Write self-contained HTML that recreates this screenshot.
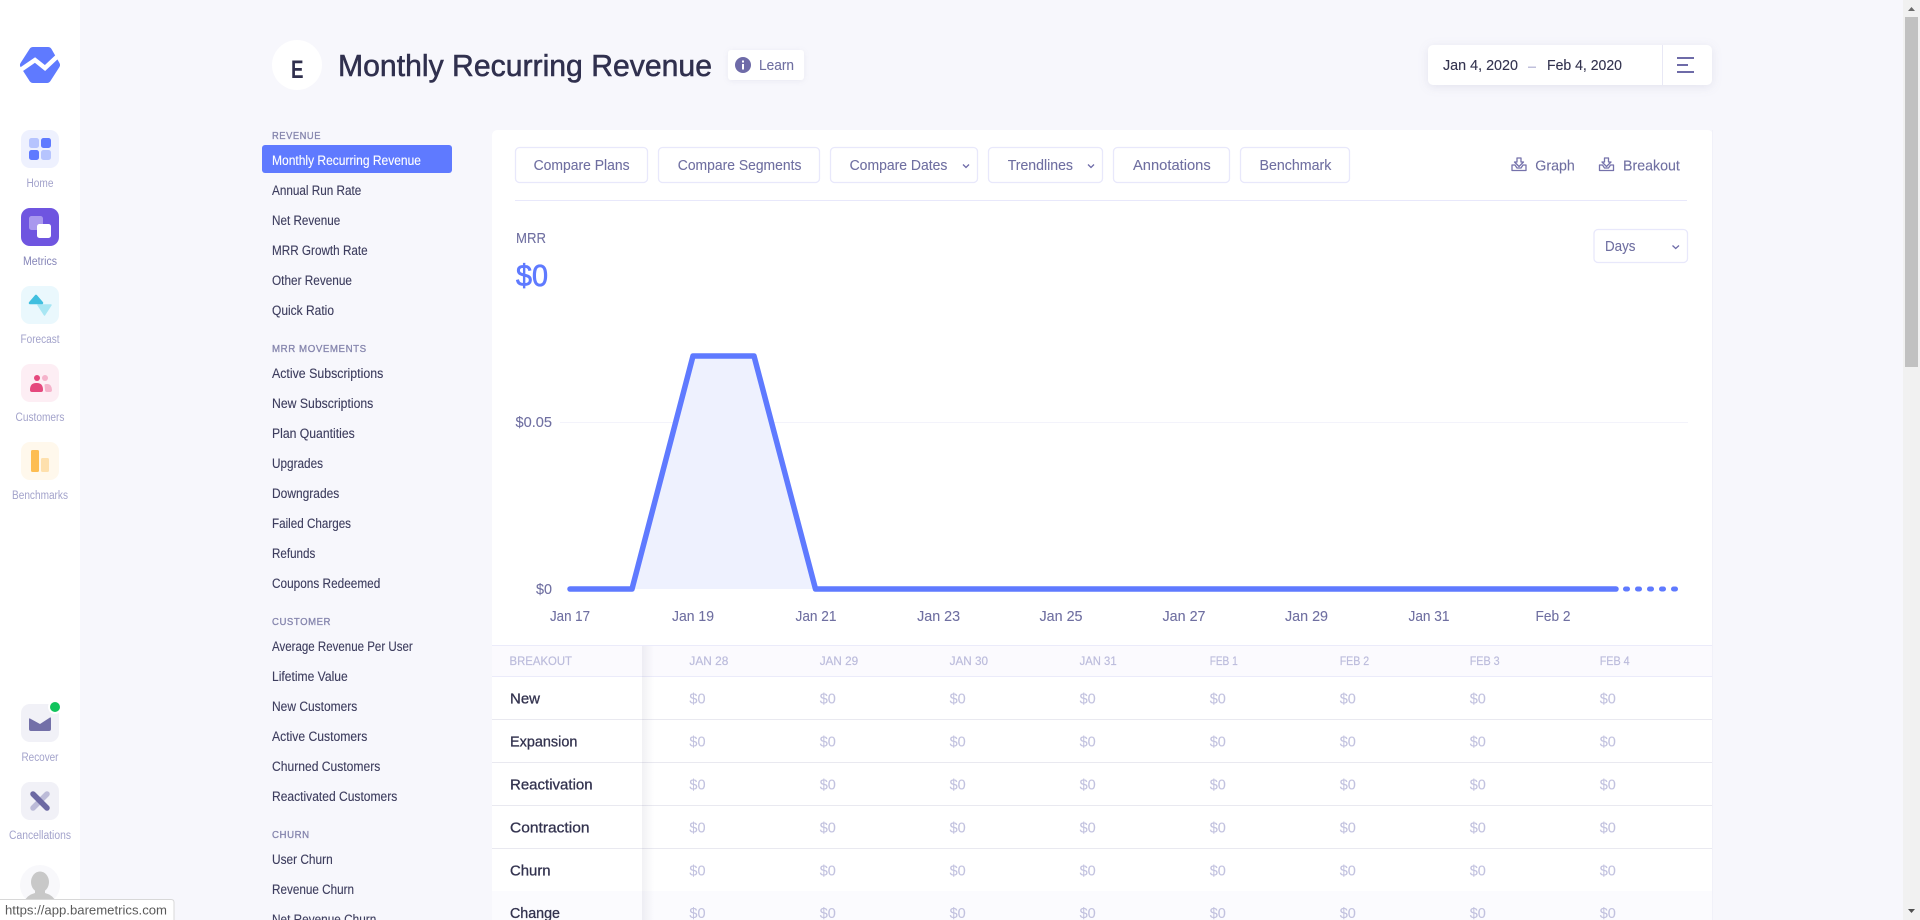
<!DOCTYPE html>
<html lang="en"><head><meta charset="utf-8"><title>Monthly Recurring Revenue</title>
<style>
html,body{margin:0;padding:0;width:1920px;height:920px;overflow:hidden;background:#f7f7fc}
svg{display:block;position:absolute;left:0;top:0}
text{font-family:"Liberation Sans",sans-serif;white-space:pre}
.n{font-size:13.5px;fill:#3d3d5e;stroke:#3d3d5e;stroke-width:.12}
.h{font-size:10.5px;fill:#8585ad;stroke:#8585ad;stroke-width:.3;letter-spacing:.6px}
.s{font-size:11.5px;fill:#a3a3cb;text-anchor:middle}
.b{font-size:15px;fill:#6f6fa1;stroke:#6f6fa1;stroke-width:.1}
.c{font-size:15px;fill:#6f6fa1;text-anchor:middle;stroke:#6f6fa1;stroke-width:.1}
.r{font-size:15px;fill:#33334f;stroke:#33334f;stroke-width:.3}
.v{font-size:14.5px;fill:#c2c2df;stroke:#c2c2df;stroke-width:.1}
.t{font-size:12px;fill:#bcbcdc;stroke:#bcbcdc;stroke-width:.2}
</style></head><body>
<svg width="1920" height="920" viewBox="0 0 1920 920" xmlns="http://www.w3.org/2000/svg">
<rect width="1920" height="920" fill="#f7f7fc"/>
<rect width="80" height="920" fill="#fff"/>

<!-- logo -->
<polygon points="33,51 48,51 56,65 47,79 33,79 24,65" fill="#5f7aff" stroke="#5f7aff" stroke-width="8" stroke-linejoin="round"/>
<polyline points="19,71 35,60 45,68 61,53" fill="none" stroke="#fff" stroke-width="4.500"/>

<!-- sidebar icons -->
<rect x="21" y="130" width="38" height="38" rx="9" fill="#eef1fe"/>
<rect x="29" y="138" width="10" height="10" rx="2.500" fill="#b6c4fe"/><rect x="41" y="138" width="10" height="10" rx="2.500" fill="#5f7aff"/>
<rect x="29" y="150" width="10" height="10" rx="2.500" fill="#5f7aff"/><rect x="41" y="150" width="10" height="10" rx="2.500" fill="#b6c4fe"/>
<text class="s" x="40" y="187" textLength="27" lengthAdjust="spacingAndGlyphs">Home</text>

<rect x="21" y="208" width="38" height="38" rx="9" fill="#6f55e0"/>
<rect x="29" y="216" width="14" height="14" rx="2.500" fill="#a998ee"/><rect x="37" y="224" width="14" height="14" rx="2.500" fill="#fff"/>
<text class="s" x="40" y="265" textLength="34" lengthAdjust="spacingAndGlyphs" style="fill:#8585b8">Metrics</text>

<rect x="21" y="286" width="38" height="38" rx="9" fill="#eaf8fd"/>
<polygon points="44.500,305 51,305 44.500,315 38,305" fill="#a8e6f3" stroke="#a8e6f3" stroke-width="1.500" stroke-linejoin="round"/>
<polygon points="36,296 42,303 30,303" fill="#41bfdf" stroke="#41bfdf" stroke-width="2.500" stroke-linejoin="round"/>
<text class="s" x="40" y="343" textLength="39" lengthAdjust="spacingAndGlyphs">Forecast</text>

<rect x="21" y="364" width="38" height="38" rx="9" fill="#fdeef4"/>
<circle cx="37" cy="378" r="3" fill="#e5487d"/><circle cx="45" cy="378" r="3" fill="#f5b3cb"/>
<path d="M44.500 385q0-1 2-1h1q4 0 4.500 6q0 2-2 2h-3q-2 0-2-2z" fill="#f5b3cb"/>
<path d="M30 390q0-7 6-7h1q6 0 6 7q0 2-2 2h-9q-2 0-2-2z" fill="#e5487d"/>
<text class="s" x="40" y="421" textLength="49" lengthAdjust="spacingAndGlyphs">Customers</text>

<rect x="21" y="442" width="38" height="38" rx="9" fill="#fff8ec"/>
<rect x="31" y="450" width="8" height="22" rx="1.500" fill="#fdbd52"/><rect x="41" y="458" width="8" height="14" rx="1.500" fill="#fee0ad"/>
<text class="s" x="40" y="499" textLength="56" lengthAdjust="spacingAndGlyphs">Benchmarks</text>

<rect x="21" y="704" width="38" height="38" rx="9" fill="#f1f1f7"/>
<path d="M29 719q0-1 1-.500L40 724 50 717.500q1-.500 1 1V729q0 2-2 2H31q-2 0-2-2z" fill="#7370a8"/>
<circle cx="55" cy="707" r="7" fill="#fff"/><circle cx="55" cy="707" r="5" fill="#10c45c"/>
<text class="s" x="40" y="761" textLength="37" lengthAdjust="spacingAndGlyphs">Recover</text>

<rect x="21" y="782" width="38" height="38" rx="9" fill="#f1f1f7"/>
<line x1="47" y1="794" x2="33" y2="808" stroke="#bcbbd8" stroke-width="5.500" stroke-linecap="round"/>
<line x1="33" y1="794" x2="47" y2="808" stroke="#6c69a3" stroke-width="5.500" stroke-linecap="round"/>
<text class="s" x="40" y="839" textLength="62" lengthAdjust="spacingAndGlyphs">Cancellations</text>

<circle cx="40" cy="885" r="20" fill="#f8f8fb"/>
<ellipse cx="40" cy="882" rx="9" ry="10.500" fill="#c8c8c8"/>
<path d="M24 902q3-7 11-9v-5h10v5q8 2 11 9z" fill="#c8c8c8"/>

<!-- header -->
<circle cx="297" cy="65" r="25" fill="#fff"/>
<text x="291" y="78" font-size="25" font-weight="bold" fill="#30304e" textLength="12.500" lengthAdjust="spacingAndGlyphs">E</text>
<text x="338" y="76" font-size="31" fill="#30304e" stroke="#30304e" stroke-width=".55" textLength="374" lengthAdjust="spacingAndGlyphs">Monthly Recurring Revenue</text>

<rect x="728" y="50" width="76" height="30" rx="3" fill="#fff" style="filter:drop-shadow(0 1px 3px rgba(60,60,120,.07))"/>
<circle cx="743" cy="65" r="8" fill="#6e6ba8"/>
<rect x="742" y="64" width="2" height="5.500" fill="#fff"/><rect x="742" y="60.500" width="2" height="2" fill="#fff"/>
<text class="b" x="759" y="70" textLength="35" lengthAdjust="spacingAndGlyphs">Learn</text>

<rect x="1428" y="45" width="284" height="40" rx="5" fill="#fff" style="filter:drop-shadow(0 2px 5px rgba(60,60,120,.1))"/>
<rect x="1662" y="45" width="1" height="40" fill="#e8e8f5"/>
<text x="1443" y="70" font-size="15" fill="#33334f" stroke="#33334f" stroke-width=".12" textLength="75" lengthAdjust="spacingAndGlyphs">Jan 4, 2020</text>
<rect x="1528" y="66.500" width="8" height="1.500" fill="#c0c0dc"/>
<text x="1547" y="70" font-size="15" fill="#33334f" stroke="#33334f" stroke-width=".12" textLength="75" lengthAdjust="spacingAndGlyphs">Feb 4, 2020</text>
<rect x="1677" y="57" width="17" height="2" fill="#6e6ba8"/><rect x="1677" y="64" width="11" height="2" fill="#6e6ba8"/><rect x="1677" y="71" width="17" height="2" fill="#6e6ba8"/>

<!-- sub nav -->
<text class="h" x="272" y="139" textLength="49" lengthAdjust="spacingAndGlyphs">REVENUE</text>
<rect x="262" y="145" width="190" height="28" rx="3" fill="#5f7aff"/>
<text class="n" x="272" y="165" style="fill:#fff;stroke:#fff" textLength="149" lengthAdjust="spacingAndGlyphs">Monthly Recurring Revenue</text>
<text class="n" x="272" y="195" textLength="89.300" lengthAdjust="spacingAndGlyphs">Annual Run Rate</text>
<text class="n" x="272" y="225" textLength="68.300" lengthAdjust="spacingAndGlyphs">Net Revenue</text>
<text class="n" x="272" y="255" textLength="95.700" lengthAdjust="spacingAndGlyphs">MRR Growth Rate</text>
<text class="n" x="272" y="285" textLength="80" lengthAdjust="spacingAndGlyphs">Other Revenue</text>
<text class="n" x="272" y="315" textLength="62" lengthAdjust="spacingAndGlyphs">Quick Ratio</text>
<text class="h" x="272" y="352" textLength="94.700" lengthAdjust="spacingAndGlyphs">MRR MOVEMENTS</text>
<text class="n" x="272" y="378" textLength="111.300" lengthAdjust="spacingAndGlyphs">Active Subscriptions</text>
<text class="n" x="272" y="408" textLength="101.300" lengthAdjust="spacingAndGlyphs">New Subscriptions</text>
<text class="n" x="272" y="438" textLength="82.700" lengthAdjust="spacingAndGlyphs">Plan Quantities</text>
<text class="n" x="272" y="468" textLength="51" lengthAdjust="spacingAndGlyphs">Upgrades</text>
<text class="n" x="272" y="498" textLength="67.300" lengthAdjust="spacingAndGlyphs">Downgrades</text>
<text class="n" x="272" y="528" textLength="79" lengthAdjust="spacingAndGlyphs">Failed Charges</text>
<text class="n" x="272" y="558" textLength="43.300" lengthAdjust="spacingAndGlyphs">Refunds</text>
<text class="n" x="272" y="588" textLength="108.300" lengthAdjust="spacingAndGlyphs">Coupons Redeemed</text>
<text class="h" x="272" y="625" textLength="59" lengthAdjust="spacingAndGlyphs">CUSTOMER</text>
<text class="n" x="272" y="651" textLength="140.700" lengthAdjust="spacingAndGlyphs">Average Revenue Per User</text>
<text class="n" x="272" y="681" textLength="75.700" lengthAdjust="spacingAndGlyphs">Lifetime Value</text>
<text class="n" x="272" y="711" textLength="85.300" lengthAdjust="spacingAndGlyphs">New Customers</text>
<text class="n" x="272" y="741" textLength="95.300" lengthAdjust="spacingAndGlyphs">Active Customers</text>
<text class="n" x="272" y="771" textLength="108.300" lengthAdjust="spacingAndGlyphs">Churned Customers</text>
<text class="n" x="272" y="801" textLength="125.300" lengthAdjust="spacingAndGlyphs">Reactivated Customers</text>
<text class="h" x="272" y="838" textLength="37.700" lengthAdjust="spacingAndGlyphs">CHURN</text>
<text class="n" x="272" y="864" textLength="60.700" lengthAdjust="spacingAndGlyphs">User Churn</text>
<text class="n" x="272" y="894" textLength="82" lengthAdjust="spacingAndGlyphs">Revenue Churn</text>
<text class="n" x="272" y="924" textLength="104.300" lengthAdjust="spacingAndGlyphs">Net Revenue Churn</text>

<!-- panel -->
<path d="M492 136q0-6 6-6H1707q6 0 6 6V920H492z" fill="#fff"/>
<rect x="1712" y="130" width="1" height="790" fill="#f1f1f9"/>

<g fill="#fff" stroke="#e8e8fb" stroke-width="1.300">
<rect x="515.500" y="147.500" width="132" height="35" rx="4"/>
<rect x="658.500" y="147.500" width="161" height="35" rx="4"/>
<rect x="830.500" y="147.500" width="147" height="35" rx="4"/>
<rect x="988.500" y="147.500" width="114" height="35" rx="4"/>
<rect x="1113.500" y="147.500" width="116" height="35" rx="4"/>
<rect x="1240.500" y="147.500" width="109" height="35" rx="4"/>
<rect x="1594" y="229.500" width="93.500" height="33" rx="4"/>
</g>
<text class="b" x="533.600" y="170" textLength="96" lengthAdjust="spacingAndGlyphs">Compare Plans</text>
<text class="b" x="677.800" y="170" textLength="123.600" lengthAdjust="spacingAndGlyphs">Compare Segments</text>
<text class="b" x="849.600" y="170" textLength="97.800" lengthAdjust="spacingAndGlyphs">Compare Dates</text>
<polyline points="963,164.500 966,167.500 969,164.500" fill="none" stroke="#6e6ba8" stroke-width="1.300"/>
<text class="b" x="1007.700" y="170" textLength="65.300" lengthAdjust="spacingAndGlyphs">Trendlines</text>
<polyline points="1088,164.500 1091,167.500 1094,164.500" fill="none" stroke="#6e6ba8" stroke-width="1.300"/>
<text class="b" x="1133" y="170" textLength="77.700" lengthAdjust="spacingAndGlyphs">Annotations</text>
<text class="b" x="1259.500" y="170" textLength="71.900" lengthAdjust="spacingAndGlyphs">Benchmark</text>

<g fill="none" stroke="#7572ab" stroke-width="1.300" stroke-linejoin="round">
<g transform="translate(1511,157)"><path d="M1 8h3l2 3h4l2-3h3v5.500h-14z"/><path d="M6 1h4v4h2.500L8 9.500 3.500 5H6z"/></g>
<g transform="translate(1598.500,157)"><path d="M1 8h3l2 3h4l2-3h3v5.500h-14z"/><path d="M6 1h4v4h2.500L8 9.500 3.500 5H6z"/></g>
</g>
<text class="b" x="1535.300" y="170.500" textLength="39.500" lengthAdjust="spacingAndGlyphs">Graph</text>
<text class="b" x="1623" y="170.500" textLength="56.800" lengthAdjust="spacingAndGlyphs">Breakout</text>

<rect x="515" y="200" width="1172" height="1" fill="#e8e8fb"/>

<text x="516" y="243" font-size="15" fill="#6f6fa1" stroke="#6f6fa1" stroke-width=".1" textLength="30" lengthAdjust="spacingAndGlyphs">MRR</text>
<text x="516" y="286" font-size="31" fill="#5f7aff" stroke="#5f7aff" stroke-width=".7" textLength="32" lengthAdjust="spacingAndGlyphs">$0</text>
<text class="b" x="1605" y="251" textLength="30.500" lengthAdjust="spacingAndGlyphs">Days</text>
<polyline points="1672.500,245.500 1675.700,248.500 1679,245.500" fill="none" stroke="#6e6ba8" stroke-width="1.300"/>

<!-- chart -->
<rect x="560" y="422" width="1128" height="1" fill="#f3f3fb"/>
<polygon points="632,589 693,356 754,356 815.500,589" fill="#eef1fe"/>
<polyline points="570,589 632,589 693,356 754,356 815.500,589 1616,589" fill="none" stroke="#5f7aff" stroke-width="5.500" stroke-linecap="round" stroke-linejoin="round"/>
<g stroke="#5f7aff" stroke-width="5" stroke-linecap="round"><line x1="1625.500" y1="589" x2="1627.500" y2="589"/><line x1="1637.500" y1="589" x2="1639.500" y2="589"/><line x1="1649.500" y1="589" x2="1651.500" y2="589"/><line x1="1661.500" y1="589" x2="1663.500" y2="589"/><line x1="1673.500" y1="589" x2="1675.500" y2="589"/></g>
<text class="b" x="515.500" y="427" textLength="36.500" lengthAdjust="spacingAndGlyphs">$0.05</text>
<text class="b" x="536" y="594" textLength="16" lengthAdjust="spacingAndGlyphs">$0</text>
<text class="c" x="570" y="621" textLength="40" lengthAdjust="spacingAndGlyphs">Jan 17</text>
<text class="c" x="693" y="621" textLength="42" lengthAdjust="spacingAndGlyphs">Jan 19</text>
<text class="c" x="816" y="621" textLength="41" lengthAdjust="spacingAndGlyphs">Jan 21</text>
<text class="c" x="938.600" y="621" textLength="43" lengthAdjust="spacingAndGlyphs">Jan 23</text>
<text class="c" x="1061" y="621" textLength="43" lengthAdjust="spacingAndGlyphs">Jan 25</text>
<text class="c" x="1184" y="621" textLength="43" lengthAdjust="spacingAndGlyphs">Jan 27</text>
<text class="c" x="1306.500" y="621" textLength="43" lengthAdjust="spacingAndGlyphs">Jan 29</text>
<text class="c" x="1429" y="621" textLength="41" lengthAdjust="spacingAndGlyphs">Jan 31</text>
<text class="c" x="1553" y="621" textLength="35" lengthAdjust="spacingAndGlyphs">Feb 2</text>

<!-- table -->
<rect x="492" y="645" width="1220" height="32" fill="#fbfafe"/>
<rect x="492" y="891" width="1220" height="29" fill="#fbfbfe"/>
<rect x="492" y="645" width="1220" height="1" fill="#ebebfa"/>
<rect x="492" y="676" width="1220" height="1" fill="#ebebfa"/>
<g fill="#e9e9f0">
<rect x="492" y="719" width="1220" height="1"/><rect x="492" y="762" width="1220" height="1"/><rect x="492" y="805" width="1220" height="1"/><rect x="492" y="848" width="1220" height="1"/>
</g>
<defs><linearGradient id="sh" x1="0" x2="1" y1="0" y2="0"><stop offset="0" stop-color="#3c3c64" stop-opacity=".07"/><stop offset="1" stop-color="#3c3c64" stop-opacity="0"/></linearGradient></defs>
<rect x="642" y="646" width="12" height="274" fill="url(#sh)"/>

<text class="t" x="509.500" y="665" textLength="62.500" lengthAdjust="spacingAndGlyphs">BREAKOUT</text>
<text class="t" x="689.400" y="665" textLength="39" lengthAdjust="spacingAndGlyphs">JAN 28</text>
<text class="t" x="819.700" y="665" textLength="38.500" lengthAdjust="spacingAndGlyphs">JAN 29</text>
<text class="t" x="949.600" y="665" textLength="38.500" lengthAdjust="spacingAndGlyphs">JAN 30</text>
<text class="t" x="1079.600" y="665" textLength="37" lengthAdjust="spacingAndGlyphs">JAN 31</text>
<text class="t" x="1209.700" y="665" textLength="28" lengthAdjust="spacingAndGlyphs">FEB 1</text>
<text class="t" x="1339.700" y="665" textLength="29.500" lengthAdjust="spacingAndGlyphs">FEB 2</text>
<text class="t" x="1469.700" y="665" textLength="30" lengthAdjust="spacingAndGlyphs">FEB 3</text>
<text class="t" x="1599.700" y="665" textLength="30" lengthAdjust="spacingAndGlyphs">FEB 4</text>

<text class="r" x="510" y="703.500" textLength="30" lengthAdjust="spacingAndGlyphs">New</text>
<text class="r" x="510" y="746.500" textLength="67.400" lengthAdjust="spacingAndGlyphs">Expansion</text>
<text class="r" x="510" y="789.500" textLength="82.600" lengthAdjust="spacingAndGlyphs">Reactivation</text>
<text class="r" x="510" y="832.500" textLength="79.500" lengthAdjust="spacingAndGlyphs">Contraction</text>
<text class="r" x="510" y="875.500" textLength="40.600" lengthAdjust="spacingAndGlyphs">Churn</text>
<text class="r" x="510" y="918" textLength="50" lengthAdjust="spacingAndGlyphs">Change</text>

<g>
<text class="v" x="689.400" y="703.500">$0</text><text class="v" x="819.700" y="703.500">$0</text><text class="v" x="949.600" y="703.500">$0</text><text class="v" x="1079.600" y="703.500">$0</text><text class="v" x="1209.700" y="703.500">$0</text><text class="v" x="1339.700" y="703.500">$0</text><text class="v" x="1469.700" y="703.500">$0</text><text class="v" x="1599.700" y="703.500">$0</text>
<text class="v" x="689.400" y="746.500">$0</text><text class="v" x="819.700" y="746.500">$0</text><text class="v" x="949.600" y="746.500">$0</text><text class="v" x="1079.600" y="746.500">$0</text><text class="v" x="1209.700" y="746.500">$0</text><text class="v" x="1339.700" y="746.500">$0</text><text class="v" x="1469.700" y="746.500">$0</text><text class="v" x="1599.700" y="746.500">$0</text>
<text class="v" x="689.400" y="789.500">$0</text><text class="v" x="819.700" y="789.500">$0</text><text class="v" x="949.600" y="789.500">$0</text><text class="v" x="1079.600" y="789.500">$0</text><text class="v" x="1209.700" y="789.500">$0</text><text class="v" x="1339.700" y="789.500">$0</text><text class="v" x="1469.700" y="789.500">$0</text><text class="v" x="1599.700" y="789.500">$0</text>
<text class="v" x="689.400" y="832.500">$0</text><text class="v" x="819.700" y="832.500">$0</text><text class="v" x="949.600" y="832.500">$0</text><text class="v" x="1079.600" y="832.500">$0</text><text class="v" x="1209.700" y="832.500">$0</text><text class="v" x="1339.700" y="832.500">$0</text><text class="v" x="1469.700" y="832.500">$0</text><text class="v" x="1599.700" y="832.500">$0</text>
<text class="v" x="689.400" y="875.500">$0</text><text class="v" x="819.700" y="875.500">$0</text><text class="v" x="949.600" y="875.500">$0</text><text class="v" x="1079.600" y="875.500">$0</text><text class="v" x="1209.700" y="875.500">$0</text><text class="v" x="1339.700" y="875.500">$0</text><text class="v" x="1469.700" y="875.500">$0</text><text class="v" x="1599.700" y="875.500">$0</text>
<text class="v" x="689.400" y="918">$0</text><text class="v" x="819.700" y="918">$0</text><text class="v" x="949.600" y="918">$0</text><text class="v" x="1079.600" y="918">$0</text><text class="v" x="1209.700" y="918">$0</text><text class="v" x="1339.700" y="918">$0</text><text class="v" x="1469.700" y="918">$0</text><text class="v" x="1599.700" y="918">$0</text>
</g>

<!-- scrollbar -->
<rect x="1903" width="17" height="920" fill="#f1f1f1"/>
<rect x="1905" y="17" width="13" height="350" fill="#c1c1c1"/>
<polygon points="1911.500,7 1915,11 1908,11" fill="#6a6a6a"/>
<polygon points="1908,909 1915,909 1911.500,913" fill="#505050"/>

<!-- status bubble -->
<path d="M-1 899.500H171q3 0 3 3V921H-1z" fill="#fff" stroke="#d8d8d8"/>
<text x="5" y="914.500" font-size="13" fill="#5a5a5a" textLength="162" lengthAdjust="spacingAndGlyphs">https://app.baremetrics.com</text>
</svg>
</body></html>
